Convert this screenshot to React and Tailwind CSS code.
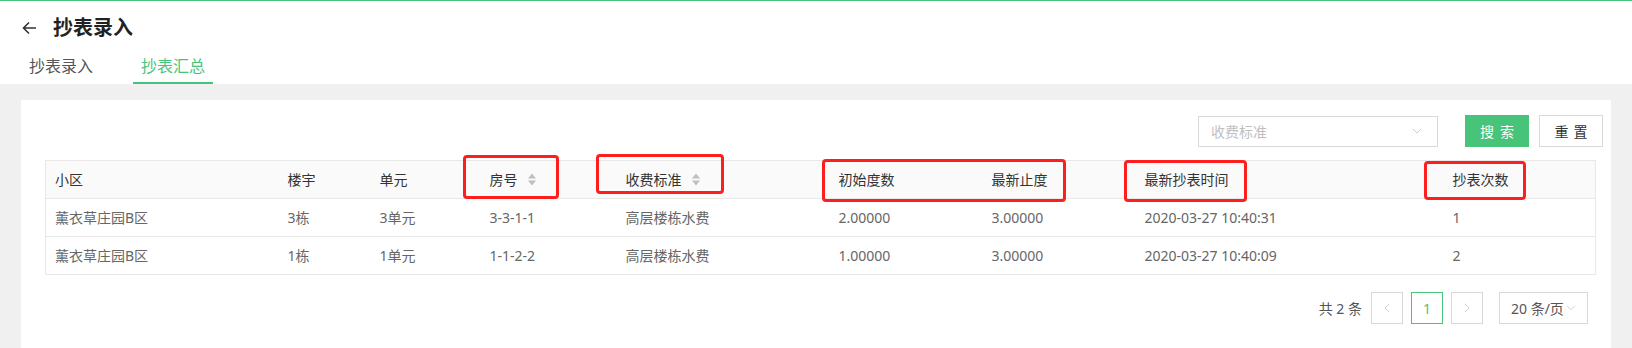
import { ChevronDown, ChevronLeft, ChevronRight } from 'lucide-react';

const columns = [
  { title: '小区', width: 'w-[233px]' },
  { title: '楼宇', width: 'w-[92px]' },
  { title: '单元', width: 'w-[110px]' },
  { title: '房号', width: 'w-[136px]', sort: true },
  { title: '收费标准', width: 'w-[213px]', sort: true },
  { title: '初始度数', width: 'w-[153px]' },
  { title: '最新止度', width: 'w-[153px]' },
  { title: '最新抄表时间', width: 'w-[308px]' },
  { title: '抄表次数', width: 'w-[152px]' },
];

const rows = [
  ['薰衣草庄园B区', '3栋', '3单元', '3-3-1-1', '高层楼栋水费', '2.00000', '3.00000', '2020-03-27 10:40:31', '1'],
  ['薰衣草庄园B区', '1栋', '1单元', '1-1-2-2', '高层楼栋水费', '1.00000', '3.00000', '2020-03-27 10:40:09', '2'],
];

// annotation boxes drawn over the header, relative to the table
const marks = [
  'left-[418px] top-[-5px] w-[96px] h-[44px]',
  'left-[551px] top-[-6px] w-[128px] h-[40px]',
  'left-[777px] top-[-1px] w-[244px] h-[43px]',
  'left-[1079px] top-[0px] w-[123px] h-[42px]',
  'left-[1379px] top-[1px] w-[102px] h-[39px]',
];

const SortIcon = () => (
  <svg width="8" height="13" viewBox="0 0 8 13" className="ml-[10px] shrink-0">
    <path d="M4 0.5 L8 5.5 L0 5.5 Z" fill="#bfbfbf" />
    <path d="M4 12.5 L8 7.5 L0 7.5 Z" fill="#bfbfbf" />
  </svg>
);

const App = () => {
  return (
    <div className="w-[1632px] h-[348px] overflow-hidden bg-[#f0f0f0] text-[14px] font-['Noto_Sans','Noto_Sans_CJK_SC',sans-serif]">
      {/* page header */}
      <div className="bg-white border-t border-[#47c479]">
        <div className="flex items-center h-[28px] mt-[13px] pl-[22px]">
          <svg width="15" height="14" viewBox="0 0 15 14" className="shrink-0">
            <path d="M14 7 H1.5 M7 1.5 L1.5 7 L7 12.5" fill="none" stroke="#333" strokeWidth="1.6" />
          </svg>
          <h1 className="ml-[16px] text-[20px] leading-[28px] font-bold text-[#222]">抄表录入</h1>
        </div>
        <div className="flex gap-[32px] pl-[21px] mt-[12px]">
          <div className="w-[80px] pb-[4px] border-b-2 border-transparent text-center text-[16px] leading-[24px] text-[#555]">抄表录入</div>
          <div className="w-[80px] pb-[4px] border-b-2 border-[#47c479] text-center text-[16px] leading-[24px] text-[#47c479]">抄表汇总</div>
        </div>
      </div>

      {/* content card */}
      <div className="ml-[21px] mr-[21px] mt-[16px] bg-white pl-[24px] pr-[16px] pt-[15px] pb-[30px]">
        <div className="flex justify-end items-center mr-[-8px]">
          <div className="flex items-center justify-between w-[240px] h-[31px] border border-[#d9d9d9] px-[12px] text-[#bfbfbf]">
            <span>收费标准</span>
            <ChevronDown size={16} strokeWidth={1.2} className="text-[#c0c0c0]" />
          </div>
          <button className="ml-[27px] w-[64px] h-[32px] bg-[#47c479] text-white tracking-[6px] pl-[6px]">搜索</button>
          <button className="ml-[10px] w-[64px] h-[32px] border border-[#d9d9d9] text-[#333] tracking-[5px] pl-[5px]">重置</button>
        </div>

        <div className="relative mt-[13px]">
          <table className="w-[1550px] table-fixed border-collapse border border-[#e8e8e8]">
            <colgroup>
              {columns.map((c) => (
                <col key={c.title} className={c.width} />
              ))}
            </colgroup>
            <thead>
              <tr className="bg-[#fafafa] h-[38px]">
                {columns.map((c) => (
                  <th key={c.title} className="pl-[9px] text-left font-normal text-[#333] border-b border-[#e8e8e8]">
                    <span className="flex items-center">
                      {c.title}
                      {c.sort && <SortIcon />}
                    </span>
                  </th>
                ))}
              </tr>
            </thead>
            <tbody>
              {rows.map((r, i) => (
                <tr key={i} className="h-[38px]">
                  {r.map((v, j) => (
                    <td key={j} className="pl-[9px] text-[#666] border-b border-[#e8e8e8]">{v}</td>
                  ))}
                </tr>
              ))}
            </tbody>
          </table>
          {marks.map((m) => (
            <div key={m} className={`absolute ${m} border-[3px] border-[#ff1e1e] rounded-[4px]`} />
          ))}
        </div>

        <div className="flex justify-end items-center mt-[17px] pr-[7px] text-[#555]">
          <span className="mr-[9px]">共 2 条</span>
          <button className="w-[32px] h-[32px] border border-[#d9d9d9] flex items-center justify-center text-[#c8c8c8]">
            <ChevronLeft size={16} strokeWidth={1.2} />
          </button>
          <button className="ml-[8px] w-[32px] h-[32px] border border-[#47c479] text-[#47c479]">1</button>
          <button className="ml-[8px] w-[32px] h-[32px] border border-[#d9d9d9] flex items-center justify-center text-[#c8c8c8]">
            <ChevronRight size={16} strokeWidth={1.2} />
          </button>
          <div className="ml-[16px] w-[89px] h-[32px] border border-[#d9d9d9] flex items-center pl-[11px] text-[#555]">
            <span>20 条/页</span>
            <ChevronDown size={14} strokeWidth={1.2} className="text-[#c0c0c0]" />
          </div>
        </div>
      </div>
    </div>
  );
};

export default App;
